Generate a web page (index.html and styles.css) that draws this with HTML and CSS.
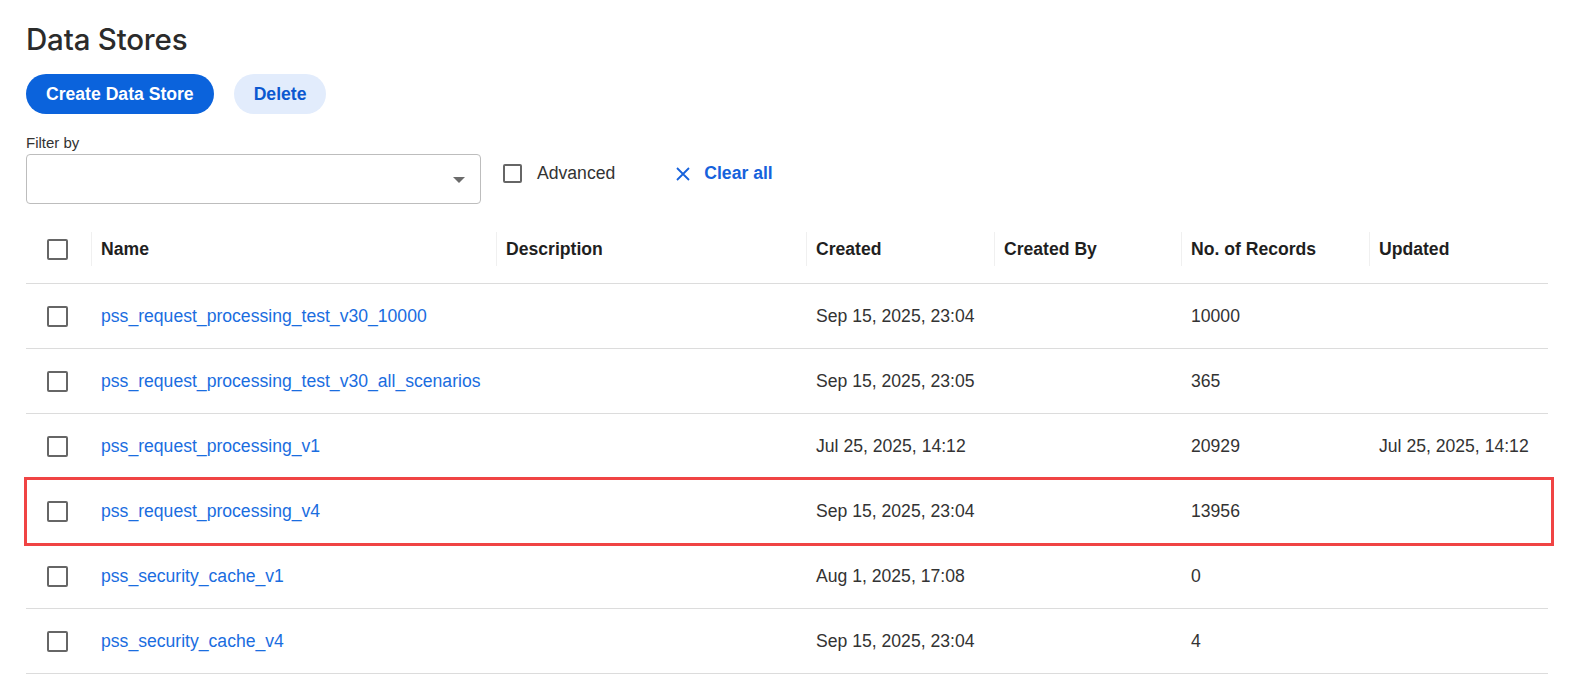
FILE: index.html
```html
<!DOCTYPE html>
<html>
<head>
<meta charset="utf-8">
<link rel="stylesheet" href="styles.css">
</head>
<body>
<div class="page">
  <h1 class="title">Data Stores</h1>
  <div class="actions">
    <button class="btn btn-primary">Create Data Store</button>
    <button class="btn btn-secondary">Delete</button>
  </div>
  <div class="filters">
    <div class="filter-field">
      <label class="filter-label">Filter by</label>
      <div class="select">
        <svg class="select-arrow" width="12" height="6" viewBox="0 0 12 6"><path d="M0 0h12L6 6z" fill="#6b6b6b"/></svg>
      </div>
    </div>
    <label class="adv">
      <span class="checkbox"></span>
      <span>Advanced</span>
    </label>
    <a class="clear">
      <svg width="16" height="16" viewBox="0 0 16 16"><path d="M2 2L14 14M14 2L2 14" stroke="#1662dc" stroke-width="1.8" fill="none"/></svg>
      <span>Clear all</span>
    </a>
  </div>

  <div class="table">
    <div class="row head">
      <div class="cell check"><span class="checkbox"></span></div>
      <div class="cell"><span class="hcell">Name</span></div>
      <div class="cell"><span class="hcell">Description</span></div>
      <div class="cell"><span class="hcell">Created</span></div>
      <div class="cell"><span class="hcell">Created By</span></div>
      <div class="cell"><span class="hcell">No. of Records</span></div>
      <div class="cell"><span class="hcell">Updated</span></div>
    </div>
    <div class="row">
      <div class="cell check"><span class="checkbox"></span></div>
      <div class="cell"><a class="link">pss_request_processing_test_v30_10000</a></div>
      <div class="cell"></div>
      <div class="cell">Sep 15, 2025, 23:04</div>
      <div class="cell"></div>
      <div class="cell">10000</div>
      <div class="cell"></div>
    </div>
    <div class="row">
      <div class="cell check"><span class="checkbox"></span></div>
      <div class="cell"><a class="link">pss_request_processing_test_v30_all_scenarios</a></div>
      <div class="cell"></div>
      <div class="cell">Sep 15, 2025, 23:05</div>
      <div class="cell"></div>
      <div class="cell">365</div>
      <div class="cell"></div>
    </div>
    <div class="row">
      <div class="cell check"><span class="checkbox"></span></div>
      <div class="cell"><a class="link">pss_request_processing_v1</a></div>
      <div class="cell"></div>
      <div class="cell">Jul 25, 2025, 14:12</div>
      <div class="cell"></div>
      <div class="cell">20929</div>
      <div class="cell">Jul 25, 2025, 14:12</div>
    </div>
    <div class="row highlight">
      <div class="cell check"><span class="checkbox"></span></div>
      <div class="cell"><a class="link">pss_request_processing_v4</a></div>
      <div class="cell"></div>
      <div class="cell">Sep 15, 2025, 23:04</div>
      <div class="cell"></div>
      <div class="cell">13956</div>
      <div class="cell"></div>
    </div>
    <div class="row">
      <div class="cell check"><span class="checkbox"></span></div>
      <div class="cell"><a class="link">pss_security_cache_v1</a></div>
      <div class="cell"></div>
      <div class="cell">Aug 1, 2025, 17:08</div>
      <div class="cell"></div>
      <div class="cell">0</div>
      <div class="cell"></div>
    </div>
    <div class="row">
      <div class="cell check"><span class="checkbox"></span></div>
      <div class="cell"><a class="link">pss_security_cache_v4</a></div>
      <div class="cell"></div>
      <div class="cell">Sep 15, 2025, 23:04</div>
      <div class="cell"></div>
      <div class="cell">4</div>
      <div class="cell"></div>
    </div>
  </div>
</div>
</body>
</html>
```

FILE: styles.css
```css
* { box-sizing: border-box; }
html, body { margin: 0; padding: 0; background: #fff; }
body {
  font-family: "Liberation Sans", Arial, sans-serif;
  color: #333;
  font-size: 17.6px;
}
.page {
  padding: 0 29px 0 26px;
}
.title {
  font-family: Inter, "Open Sans", sans-serif;
  font-weight: 500;
  font-size: 29.5px;
  line-height: 34px;
  color: #2b2b2b;
  margin: 0;
  padding-top: 22px;
  letter-spacing: -0.2px;
}
.actions {
  display: flex;
  gap: 20px;
  margin-top: 18px;
}
.btn {
  font-family: "Liberation Sans", Arial, sans-serif;
  font-weight: 700;
  font-size: 17.6px;
  height: 40px;
  border-radius: 20px;
  border: none;
  padding: 0 20px;
  cursor: pointer;
}
.btn-primary {
  background: #0b63dc;
  color: #fff;
}
.btn-secondary {
  background: #e2ecfc;
  color: #0b58d0;
}
.filters {
  display: flex;
  align-items: flex-end;
  margin-top: 20px;
}
.filter-field {
  display: flex;
  flex-direction: column;
  width: 455px;
}
.filter-label {
  font-size: 15px;
  line-height: 17px;
  color: #333;
  margin-bottom: 3px;
}
.select {
  height: 50px;
  border: 1px solid #bdbdbd;
  border-radius: 4px;
  display: flex;
  align-items: center;
  justify-content: flex-end;
  padding-right: 15px;
}
.select-arrow { margin-top: 2px; }
.adv {
  display: flex;
  align-items: center;
  gap: 15px;
  margin-left: 22px;
  height: 50px;
  padding-bottom: 12px;
  color: #333;
}
.clear {
  display: flex;
  align-items: center;
  gap: 13px;
  margin-left: 60px;
  height: 50px;
  padding-bottom: 11px;
  color: #1662dc;
  font-weight: 700;
}
.checkbox {
  display: inline-block;
  width: 19px;
  height: 19px;
  border: 2px solid #666;
  border-radius: 2px;
  background: #fff;
}
.table {
  margin-top: 11px;
  width: 1522px;
}
.row {
  display: grid;
  grid-template-columns: 65px 405px 310px 188px 187px 188px 179px;
  height: 65px;
  border-bottom: 1px solid #dcdcdc;
  align-items: center;
}
.row.head {
  height: 69px;
  color: #222;
  font-weight: 700;
}
.cell {
  padding-left: 10px;
  white-space: nowrap;
  color: #333;
}
.head .cell { padding-left: 0; color: #1f1f1f; }
.hcell {
  display: flex;
  align-items: center;
  height: 34px;
  border-left: 1px solid #f0f0f0;
  padding-left: 9px;
}
.cell.check,
.head .cell.check {
  padding-left: 21px;
  display: flex;
  align-items: center;
}
.cell.check .checkbox { width: 21px; height: 21px; }
.link {
  color: #1a6ddf;
  text-decoration: none;
}
.row.highlight { position: relative; }
.row.highlight::after {
  content: "";
  position: absolute;
  left: -2px;
  right: -6px;
  top: -2px;
  bottom: -3px;
  border: 3px solid #f04444;
  pointer-events: none;
}
```
